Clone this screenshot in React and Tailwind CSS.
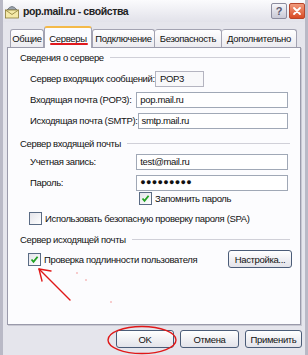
export default function App() {
  return (
    <div
      className="relative w-[308px] h-[355px] overflow-hidden bg-[#e5e5ec] border-l-[3px] border-r-[3px] border-[#b9b9c6] text-[9.5px] leading-[13px] tracking-[-0.35px] text-[#111] whitespace-nowrap"
      style={{ fontFamily: '"Liberation Sans", Arial, sans-serif' }}
    >
      {/* ——— Title bar ——— */}
      <header className="h-[22px] flex items-center pl-[1px] bg-gradient-to-b from-[#fbfbfd] to-[#e2e2ea]">
        <svg width="16" height="16" viewBox="0 0 16 16" className="mr-[3px]">
          <path d="M3 7 Q8 0 13 7 Z" fill="#9aa3ad" stroke="#5f6670" strokeWidth="0.8" />
          <rect x="1.5" y="7" width="13" height="8" fill="#f4e9a8" stroke="#8a7a36" strokeWidth="0.8" />
          <path d="M1.5 7 L8 11.5 L14.5 7" fill="none" stroke="#8a7a36" strokeWidth="0.8" />
        </svg>
        <span className="font-bold text-[10.5px] tracking-[-0.4px] text-[#222]">
          pop.mail.ru - свойства
        </span>
        <div className="ml-auto flex gap-[2px] items-center">
          <button className="w-[16px] h-[16px] rounded-[2px] border border-[#8c8c9e] bg-gradient-to-b from-[#f6f6fa] to-[#c9c9d6] flex items-center justify-center text-[11px] font-bold text-[#5a5a70]">
            ?
          </button>
          <button className="w-[16px] h-[16px] rounded-[2px] border border-[#b6452c] bg-gradient-to-b from-[#f19a7c] to-[#d84a22] flex items-center justify-center">
            <svg width="10" height="10" viewBox="0 0 10 10">
              <path d="M2 2 L8 8 M8 2 L2 8" stroke="#fff" strokeWidth="1.8" strokeLinecap="round" />
            </svg>
          </button>
        </div>
      </header>

      {/* ——— Tabs ——— */}
      <div className="flex items-end pl-[7px] h-[25px]">
        <div className="w-[34px] h-[18px] flex items-center justify-center border border-b-0 border-[#a3a3b2] rounded-t-[3px] bg-gradient-to-b from-[#ffffff] to-[#ecebf0]">
          Общие
        </div>
        <div className="relative w-[48px] h-[22px] flex items-center justify-center border border-b-0 border-[#a3a3b2] border-t-[2px] border-t-[#f4b948] rounded-t-[3px] bg-[#fcfcfe] -mb-[1px] z-10">
          Серверы
          <span className="absolute left-[5px] right-[3px] bottom-[3px] h-[2px] bg-[#e0191e] rounded-full" />
        </div>
        <div className="w-[63px] h-[18px] flex items-center justify-center border border-b-0 border-[#a3a3b2] rounded-t-[3px] bg-gradient-to-b from-[#ffffff] to-[#ecebf0]">
          Подключение
        </div>
        <div className="w-[67px] h-[18px] flex items-center justify-center border border-b-0 border-l-0 border-[#a3a3b2] rounded-t-[3px] bg-gradient-to-b from-[#ffffff] to-[#ecebf0]">
          Безопасность
        </div>
        <div className="w-[75px] h-[18px] flex items-center justify-center border border-b-0 border-l-0 border-[#a3a3b2] rounded-t-[3px] bg-gradient-to-b from-[#ffffff] to-[#ecebf0]">
          Дополнительно
        </div>
      </div>

      {/* ——— Panel ——— */}
      <section className="ml-[4px] w-[294px] h-[278px] border border-[#9a9aaa] bg-[#fcfcfe] shadow-[1px_1px_0_#c8c8d2] px-[12px] flex flex-col">
        <GroupLabel text="Сведения о сервере" className="mt-[3px]" />

        <div className="flex items-center h-[17px] mt-[6px] pl-[10px]">
          <span className="w-[125px]">Сервер входящих сообщений:</span>
          <div className="w-[49px] h-[16px] border border-[#b4b4c0] bg-[#f8f8fa] px-[4px] flex items-center">POP3</div>
        </div>
        <FieldRow label="Входящая почта (POP3):" value="pop.mail.ru" className="mt-[4px]" />
        <FieldRow label="Исходящая почта (SMTP):" value="smtp.mail.ru" className="mt-[4px]" />

        <GroupLabel text="Сервер входящей почты" className="mt-[8px]" />
        <FieldRow label="Учетная запись:" value="test@mail.ru" className="mt-[3px]" />
        <FieldRow label="Пароль:" value="●●●●●●●●●" dots className="mt-[4px]" />

        <div className="flex items-center h-[14px] mt-0 pl-[119px]">
          <Checkbox checked />
          <span className="ml-[3px]">Запомнить пароль</span>
        </div>
        <div className="flex items-center h-[14px] mt-[6px] pl-[9px]">
          <Checkbox />
          <span className="ml-[3px]">Использовать безопасную проверку пароля (SPA)</span>
        </div>

        <GroupLabel text="Сервер исходящей почты" className="mt-[8px]" />
        <div className="flex items-center h-[18px] mt-[4px] pl-[8px]">
          <Checkbox checked />
          <span className="ml-[3px]">Проверка подлинности пользователя</span>
          <XpButton className="ml-auto w-[64px] mr-[-4px]">Настройка...</XpButton>
        </div>
      </section>

      {/* ——— Bottom buttons ——— */}
      <div className="flex justify-end gap-[6px] pr-[3px] mt-[5px]">
        <XpButton className="w-[58px]">OK</XpButton>
        <XpButton className="w-[59px]">Отмена</XpButton>
        <XpButton className="w-[57px]">Применить</XpButton>
      </div>

      {/* ——— red annotations ——— */}
      <svg className="absolute left-[-3px] top-0 pointer-events-none" width="308" height="355" viewBox="0 0 308 355">
        <g stroke="#e01818" strokeWidth="1.4" fill="none" strokeLinecap="round">
          <path d="M70 300 L39 269" />
          <path d="M39 269 L51 271 M39 269 L42 281" />
          <ellipse cx="142" cy="340" rx="34" ry="13.5" />
        </g>
        <circle cx="77" cy="273" r="0.7" fill="#e77" />
        <circle cx="86" cy="280" r="0.7" fill="#e77" />
        <circle cx="111" cy="302" r="0.7" fill="#e77" />
      </svg>
    </div>
  );
}

function GroupLabel({ text, className = "" }) {
  return (
    <div className={`flex items-center h-[13px] ${className}`}>
      <span className="pr-[6px]">{text}</span>
      <div className="flex-1 h-px bg-[#d0d0d8] mr-[-2px]" />
    </div>
  );
}

function FieldRow({ label, value, dots, className = "" }) {
  return (
    <div className={`flex items-center h-[17px] pl-[10px] ${className}`}>
      <span className="w-[108px]">{label}</span>
      <div
        className={`w-[154px] h-[16px] border border-[#a0a8b6] bg-white px-[3px] flex items-center ${
          dots ? "text-[9px] tracking-[0.3px]" : ""
        }`}
      >
        {value}
      </div>
    </div>
  );
}

function Checkbox({ checked }) {
  return (
    <span className="w-[13px] h-[13px] border border-[#5a6b84] bg-gradient-to-br from-[#e4e4ea] to-[#ffffff] flex items-center justify-center shrink-0">
      {checked && (
        <svg width="9" height="9" viewBox="0 0 9 9">
          <path d="M1.5 4.5 L3.5 6.8 L7.6 1.8" fill="none" stroke="#21a121" strokeWidth="1.8" />
        </svg>
      )}
    </span>
  );
}

function XpButton({ children, className = "" }) {
  return (
    <button
      className={`h-[18px] rounded-[3px] border border-[#4b5c78] bg-gradient-to-b from-[#ffffff] to-[#e3e3ea] flex items-center justify-center text-[9.5px] text-[#111] ${className}`}
    >
      {children}
    </button>
  );
}
